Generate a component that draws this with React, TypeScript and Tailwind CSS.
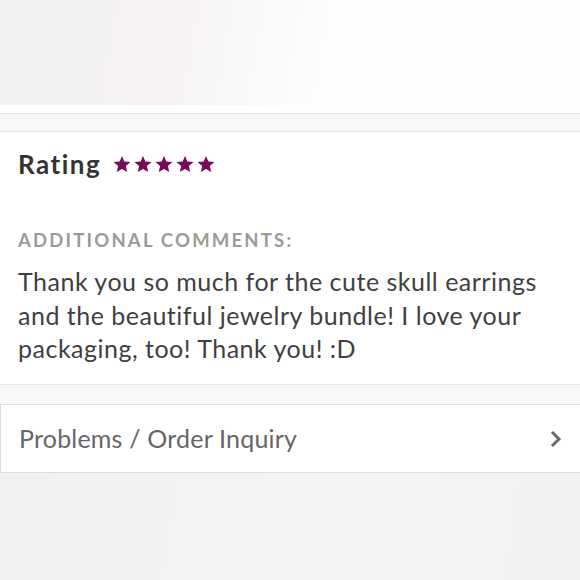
const Star = () => (
  <svg width="18" height="17" viewBox="0 0 24 23" className="fill-[#760c57]">
    <path d="M12 0l3.2 7.4 8.3.8-6.3 5.4 1.9 8.2L12 17.6l-7.1 4.2 1.9-8.2L.5 8.2l8.3-.8z" />
  </svg>
);

export default function App() {
  return (
    <div className="w-[580px] h-[580px] overflow-hidden bg-[#f3f3f3] font-['Lato',sans-serif]">
      <div className="h-[105px] bg-[linear-gradient(100deg,#f3f1f2_0%,#f6f2f5_30%,#fdfdfd_55%,#fefefe_100%)]" />
      <div className="h-[9px] bg-white border-b border-[#e4e3df]" />
      <div className="h-[18px] bg-[#f8f8f8] border-b border-[#e6e5e2]" />
      <div className="bg-white h-[252px] px-[18px] pt-[16px]">
        <div className="flex items-center gap-[12px]">
          <span className="text-[26px] leading-[32px] font-bold text-[#333] tracking-[1.5px]">Rating</span>
          <div className="flex gap-[3px] pt-[1px]">
            <Star />
            <Star />
            <Star />
            <Star />
            <Star />
          </div>
        </div>
        <p className="mt-[48px] text-[18.5px] leading-[24px] font-bold text-[#9c9a94] tracking-[2.2px]">
          ADDITIONAL COMMENTS:
        </p>
        <p className="mt-[13px] text-[25px] leading-[33.5px] text-[#3f3f3f] tracking-[0.5px]">
          Thank you so much for the cute skull earrings and the beautiful jewelry bundle! I love your
          packaging, too! Thank you! :D
        </p>
      </div>
      <div className="h-[20px] bg-[#f8f8f8] border-t border-[#e8e8e8]" />
      <div className="h-[69px] bg-white border border-r-0 border-[#dcdcdc] flex items-center justify-between pl-[18px] pr-[17px]">
        <span className="text-[25px] text-[#666] tracking-[0.2px]">Problems / Order Inquiry</span>
        <svg width="14" height="18" viewBox="0 0 14 18" fill="none" stroke="#6b6b6b" strokeWidth="3">
          <path d="M3 2l7 7-7 7" />
        </svg>
      </div>
      <div className="h-[108px] bg-[linear-gradient(100deg,#f1f1f1_0%,#f5f5f5_60%,#f2f2f2_100%)]" />
    </div>
  );
}
